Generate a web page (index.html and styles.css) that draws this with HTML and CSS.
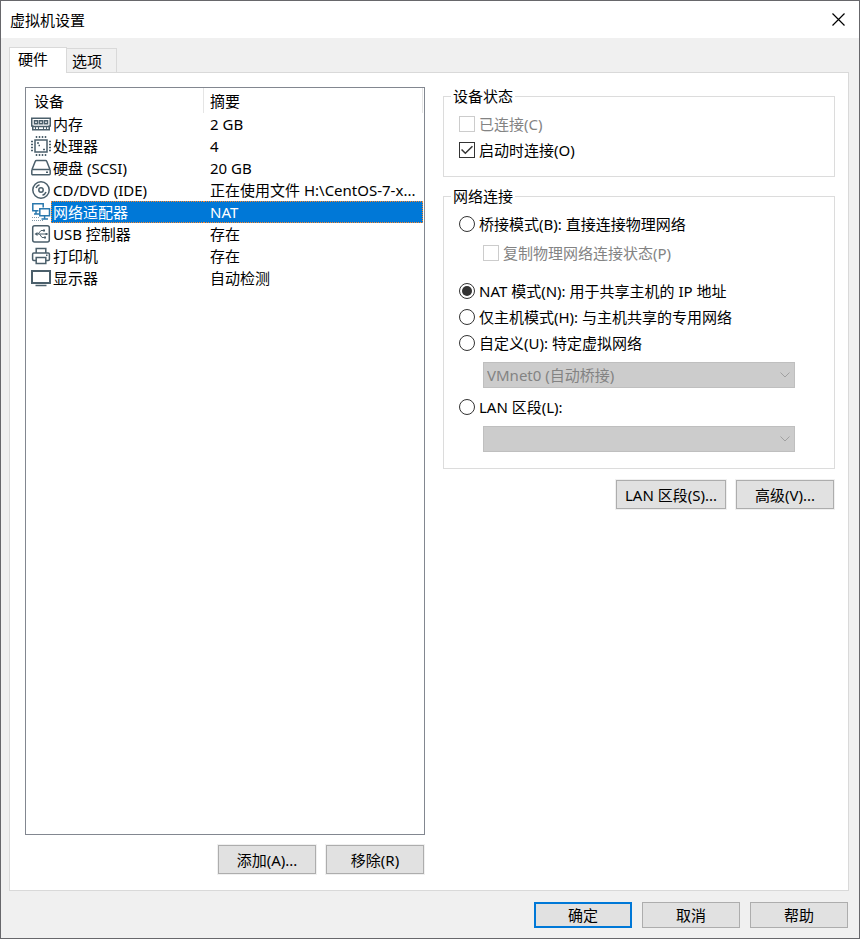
FILE: index.html
```html
<!DOCTYPE html>
<html lang="zh-CN">
  <head>
    <meta charset="UTF-8" />
    <meta name="viewport" content="width=device-width, initial-scale=1.0" />
    <title>虚拟机设置</title>
    <link rel="stylesheet" href="styles.css">
  </head>

  <body>
    <div class="window">
      <div class="titlebar">
        <h1>虚拟机设置</h1>
        <button class="close" type="button">
          <svg width="13" height="13" viewBox="0 0 13 13"><path d="M.5 .5l12 12M12.5 .5l-12 12" /></svg>
        </button>
      </div>

      <div class="tabs">
        <button class="tab active" type="button">硬件</button>
        <button class="tab" type="button">选项</button>
      </div>

      <div class="panel">
        <!-- 左侧设备列表 -->
        <div class="left">
          <div class="list">
            <table>
              <colgroup>
                <col class="col-icon" />
                <col class="col-name" />
                <col />
              </colgroup>
              <thead>
                <tr>
                  <th colspan="2">设备</th>
                  <th class="summary">摘要</th>
                </tr>
              </thead>
              <tbody>
                <tr>
                  <td class="icon">
                    <svg width="20" height="20" viewBox="0 0 20 20">
                      <path d="M.75 4.25h18.5v7.75h-1v3.75h-16.500v-3.750h-1zM1.750 12.500h16.500" />
                      <path d="M3.500 6.750h3v3h-3zM8.500 6.750h3v3h-3zM13.500 6.750h3v3h-3z" />
                      <path class="thin" d="M4.500 13v3M7.500 13v3M12.500 13v3M15.500 13v3" />
                    </svg>
                  </td>
                  <td class="name">内存</td>
                  <td class="summary">2 GB</td>
                </tr>
                <tr>
                  <td class="icon">
                    <svg width="20" height="20" viewBox="0 0 20 20">
                      <path d="M4 4h12v12h-12z" />
                      <path d="M5.5 0v2M8.5 0v2M11.5 0v2M14.5 0v2M5.5 18v2M8.5 18v2M11.5 18v2M14.5 18v2M0 5.5h2M0 8.5h2M0 11.5h2M0 14.5h2M18 5.5h2M18 8.5h2M18 11.5h2M18 14.5h2" />
                      <path d="M6 7h2M12 13.500h2M7.500 9.500h1.500" />
                    </svg>
                  </td>
                  <td class="name">处理器</td>
                  <td class="summary">4</td>
                </tr>
                <tr>
                  <td class="icon">
                    <svg width="20" height="20" viewBox="0 0 20 20">
                      <path d="M1 11.5L4.2 3.5q.4-1 1.3-1h9q.9 0 1.3 1L19 11.5M1.7 11.5h16.6q.9 0 .9 1v3.2q0 1-.9 1H1.7q-.9 0-.9-1v-3.2q0-1 .9-1z" />
                      <path d="M15 14.2h2" />
                    </svg>
                  </td>
                  <td class="name">硬盘 (SCSI)</td>
                  <td class="summary">20 GB</td>
                </tr>
                <tr>
                  <td class="icon">
                    <svg width="20" height="20" viewBox="0 0 20 20">
                      <circle cx="10" cy="10" r="8.2" />
                      <circle cx="10" cy="10" r="2.2" />
                      <path d="M5 8q1-2.500 3.500-3.300M15 12q-1 2.500-3.500 3.300" />
                    </svg>
                  </td>
                  <td class="name">CD/DVD (IDE)</td>
                  <td class="summary">正在使用文件 H:\CentOS-7-x...</td>
                </tr>
                <tr class="selected">
                  <td class="icon">
                    <svg class="blue" width="20" height="20" viewBox="0 0 20 20">
                      <path d="M7.5 8.7h-5.7v-6.9h10.4v3.7M5 8.7v3M3 12h5" />
                      <path d="M8.8 6.8h9.7v7h-9.7zM13.6 14v3M10.5 17h6.5" />
                      <path class="dots" d="M1 15.5h8M1 18.5h12" />
                    </svg>
                  </td>
                  <td class="name">网络适配器</td>
                  <td class="summary">NAT</td>
                </tr>
                <tr>
                  <td class="icon">
                    <svg width="20" height="20" viewBox="0 0 20 20">
                      <rect x="1.7" y="1.7" width="16.6" height="16.2" rx="2" />
                      <path class="thin" d="M5 10h10M7 10l3-3.5h2M8.5 10l2.5 3.5h2" />
                      <path class="fill" d="M3.5 10l3-2v4zM12 5.5h2v2h-2zM13 12.5h2v2h-2zM14.5 9h2v2h-2z" />
                    </svg>
                  </td>
                  <td class="name">USB 控制器</td>
                  <td class="summary">存在</td>
                </tr>
                <tr>
                  <td class="icon">
                    <svg width="20" height="20" viewBox="0 0 20 20">
                      <path d="M5.2 7v-4.5h9.6v4.5M5 14.5h-2.2q-1.2 0-1.2-1.2v-5q0-1.3 1.2-1.3h14.4q1.2 0 1.2 1.3v5q0 1.2-1.2 1.2h-2.2" />
                      <path d="M5.2 11.5h9.6v6h-9.6zM15 9.3h1.5" />
                    </svg>
                  </td>
                  <td class="name">打印机</td>
                  <td class="summary">存在</td>
                </tr>
                <tr>
                  <td class="icon">
                    <svg width="20" height="20" viewBox="0 0 20 20">
                      <path class="thick" d="M1 3h18v12h-18z" />
                      <path d="M4.5 17.5h11" />
                    </svg>
                  </td>
                  <td class="name">显示器</td>
                  <td class="summary">自动检测</td>
                </tr>
              </tbody>
            </table>
          </div>
          <div class="buttons">
            <button class="btn" type="button">添加(A)...</button>
            <button class="btn" type="button">移除(R)</button>
          </div>
        </div>

        <!-- 右侧网络适配器设置 -->
        <form class="right">
          <fieldset>
            <legend>设备状态</legend>
            <label class="row disabled"><input type="checkbox" disabled />已连接(C)</label>
            <label class="row"><input type="checkbox" checked />启动时连接(O)</label>
          </fieldset>

          <fieldset class="network">
            <legend>网络连接</legend>
            <label class="row"><input type="radio" name="net" />桥接模式(B): 直接连接物理网络</label>
            <label class="row sub disabled"><input type="checkbox" disabled />复制物理网络连接状态(P)</label>
            <label class="row"><input type="radio" name="net" checked />NAT 模式(N): 用于共享主机的 IP 地址</label>
            <label class="row"><input type="radio" name="net" />仅主机模式(H): 与主机共享的专用网络</label>
            <label class="row" id="custom"><input type="radio" name="net" />自定义(U): 特定虚拟网络</label>
            <div class="select">
              <select aria-labelledby="custom" disabled>
                <option>VMnet0 (自动桥接)</option>
              </select>
              <svg width="10" height="6" viewBox="0 0 10 6"><path d="M.5 .5l4.5 4.5l4.5-4.5" /></svg>
            </div>
            <label class="row" id="lan"><input type="radio" name="net" />LAN 区段(L):</label>
            <div class="select">
              <select aria-labelledby="lan" disabled></select>
              <svg width="10" height="6" viewBox="0 0 10 6"><path d="M.5 .5l4.5 4.5l4.5-4.5" /></svg>
            </div>
          </fieldset>

          <div class="buttons">
            <button class="btn wide" type="button">LAN 区段(S)...</button>
            <button class="btn" type="button">高级(V)...</button>
          </div>
        </form>
      </div>

      <div class="footer">
        <button class="btn default" type="button">确定</button>
        <button class="btn" type="button">取消</button>
        <button class="btn" type="button">帮助</button>
      </div>
    </div>
  </body>
</html>
```

FILE: styles.css
```css
* {
  box-sizing: border-box;
  padding: 0;
  margin: 0;
}

body,
button,
select {
  font-family: "Noto Sans", "Noto Sans CJK SC", sans-serif;
  font-size: 15px;
  line-height: 20px;
  color: #000;
}

svg {
  display: block;
  fill: none;
}

.window {
  display: flex;
  flex-direction: column;
  min-height: 100vh;
  border: 1px solid #67676b;
  background-color: #f0f0f0;
}

/* 标题栏 */
.titlebar {
  display: flex;
  justify-content: space-between;
  align-items: center;
  height: 37px;
  padding-left: 9px;
  background-color: #fff;
}

.titlebar h1 {
  font-size: 15px;
  font-weight: 400;
}

.close {
  padding: 12px 14px;
  border: 0;
  background: none;
}

.close svg {
  stroke: #000;
  stroke-width: 1.2;
}

/* 选项卡 */
.tabs {
  display: flex;
  align-items: flex-end;
  padding: 9px 8px 0;
}

.tab {
  height: 24px;
  width: 50px;
  padding-left: 5px;
  text-align: left;
  border: 1px solid #d9d9d9;
  border-left: 0;
  border-bottom: 0;
  background-color: #f0f0f0;
}

.tab.active {
  z-index: 1;
  height: 26px;
  width: 58px;
  margin-bottom: -1px;
  padding: 0 0 4px 8px;
  border-left: 1px solid #d9d9d9;
  background-color: #fff;
}

.panel {
  flex: 1;
  display: grid;
  grid-template-columns: 50fr 49fr;
  column-gap: 18px;
  margin: 0 10px 0 8px;
  padding: 14px 13px 15px 15px;
  border: 1px solid #d9d9d9;
  background-color: #fff;
}

/* 设备列表 */
.left {
  display: flex;
  flex-direction: column;
}

.list {
  flex: 1;
  padding-right: 1px;
  border: 1px solid #828790;
}

table {
  width: 100%;
  table-layout: fixed;
  border-spacing: 0;
}

.col-icon {
  width: 25px;
}

.col-name {
  width: 153px;
}

th {
  height: 25px;
  padding-left: 8px;
  font-weight: 400;
  text-align: left;
  border-right: 1px solid #e5e5e5;
}

th.summary,
td.summary {
  padding-left: 6px;
}

td {
  height: 22px;
  white-space: nowrap;
  border: 1px solid transparent;
  border-width: 1px 0;
}

td.icon {
  padding-left: 5px;
  border: 0;
}

td.icon svg {
  stroke: #4b5f6b;
  stroke-width: 1.5;
}

td.icon .thin {
  stroke-width: 1;
}

td.icon .thick {
  stroke-width: 2;
}

td.icon .fill {
  fill: #4b5f6b;
  stroke: none;
}

td.icon .blue {
  stroke: #2a78ad;
}

td.icon .dots {
  stroke: #8098a8;
  stroke-width: 1;
  stroke-dasharray: 1 1;
}

td.name {
  padding-left: 2px;
}

.selected .name,
.selected .summary {
  color: #fff;
  border-color: #ff8728;
  border-style: dotted;
  background-color: #0078d7;
}

.selected .name {
  border-left-width: 1px;
  padding-left: 1px;
}

.selected .summary {
  border-right-width: 1px;
}

/* 按钮 */
.buttons {
  display: flex;
  justify-content: flex-end;
  gap: 10px;
  padding: 10px 1px 1px;
}

.right .buttons {
  padding-top: 11px;
}

.btn {
  width: 98px;
  height: 29px;
  border: 1px solid #adadad;
  background-color: #e1e1e1;
  box-shadow: 0 0 0 1px #f0f0f0;
}

.btn.wide {
  width: 110px;
}

.btn.default {
  border: 2px solid #0078d7;
}

.footer {
  display: flex;
  justify-content: flex-end;
  gap: 10px;
  padding: 11px 11px 10px;
}

.footer .btn {
  height: 26px;
}

/* 设置表单 */
fieldset {
  min-width: 0;
  padding: 6px 39px 13px 15px;
  border: 1px solid #dcdcdc;
}

fieldset.network {
  margin-top: 10px;
  padding-bottom: 16px;
}

legend {
  margin-left: -8px;
  padding: 0 2px;
  line-height: 18px;
}

.row {
  display: flex;
  align-items: center;
  gap: 4px;
  height: 26px;
  white-space: nowrap;
}

.row.disabled {
  color: #838383;
}

.row.sub {
  margin: 3px 0 12px 24px;
}

input {
  appearance: none;
  display: grid;
  place-items: center;
  width: 16px;
  height: 16px;
  border: 1px solid #333;
  background-color: #fff;
}

input:disabled {
  border-color: #ccc;
}

input[type="radio"] {
  border-radius: 50%;
}

input[type="radio"]:checked::before {
  content: "";
  width: 10px;
  height: 10px;
  border-radius: 50%;
  background-color: #333;
}

input[type="checkbox"]:checked::before {
  content: "";
  width: 12px;
  height: 10px;
  background-color: #333;
  clip-path: polygon(0 50%, 9% 40%, 36% 72%, 91% 8%, 100% 18%, 36% 92%);
}

.select {
  display: grid;
  align-items: center;
  margin: 6px 0 6px 24px;
}

.select:last-child {
  margin-bottom: 0;
}

.select select,
.select svg {
  grid-area: 1 / 1;
}

.select select {
  appearance: none;
  width: 100%;
  height: 26px;
  padding: 0 24px 0 3px;
  border: 1px solid #bfbfbf;
  background-color: #ccc;
  color: #838383;
  opacity: 1;
}

.select svg {
  justify-self: end;
  margin-right: 5px;
  stroke: #a0a0a0;
  pointer-events: none;
}
```
